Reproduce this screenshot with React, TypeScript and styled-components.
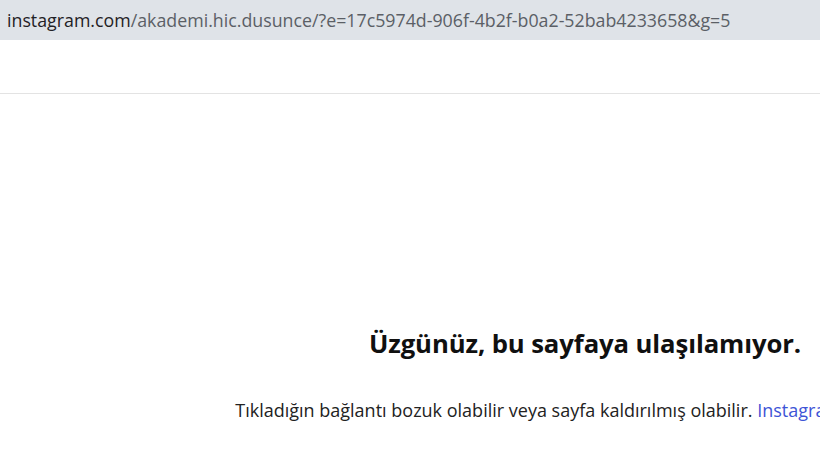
import React from "react";
import styled, { createGlobalStyle } from "styled-components";

const Global = createGlobalStyle`
  html, body { margin: 0; padding: 0; background: #fff; overflow: hidden; }
  body { font-family: "Open Sans", "Noto Sans", "Liberation Sans", sans-serif; }
`;

const Page = styled.div`
  width: 820px;
  height: 458px;
  overflow: hidden;
  display: flex;
  flex-direction: column;
`;

const AddressBar = styled.div`
  height: 40px;
  background: #dfe3e8;
  display: flex;
  align-items: center;
  padding-left: 7px;
  font-size: 17.8px;
  color: #5b5f66;
  white-space: nowrap;
`;

const Host = styled.span`
  color: #1f2125;
`;

const Header = styled.div`
  height: 53px;
  border-bottom: 1px solid #e3e3e3;
  flex-shrink: 0;
`;

const Main = styled.main`
  width: 1170px;
  flex-shrink: 0;
  text-align: center;
  padding-top: 232px;
  font-family: "Open Sans", "Noto Sans", sans-serif;
`;

const Title = styled.h2`
  margin: 0;
  font-size: 25.7px;
  font-weight: 700;
  color: #101010;
  letter-spacing: -0.1px;
  white-space: nowrap;
`;

const Text = styled.p`
  margin: 37px 0 0;
  font-size: 18px;
  color: #222;
  white-space: nowrap;
`;

const Link = styled.a`
  color: #3e54d6;
  text-decoration: none;
`;

export default function App() {
  return (
    <>
      <Global />
      <Page>
        <AddressBar>
          <Host>instagram.com</Host>/akademi.hic.dusunce/?e=17c5974d-906f-4b2f-b0a2-52bab4233658&amp;g=5
        </AddressBar>
        <Header />
        <Main>
          <Title>Üzgünüz, bu sayfaya ulaşılamıyor.</Title>
          <Text>
            Tıkladığın bağlantı bozuk olabilir veya sayfa kaldırılmış olabilir.{" "}
            <Link href="#">Instagram'a geri dön.</Link>
          </Text>
        </Main>
      </Page>
    </>
  );
}
